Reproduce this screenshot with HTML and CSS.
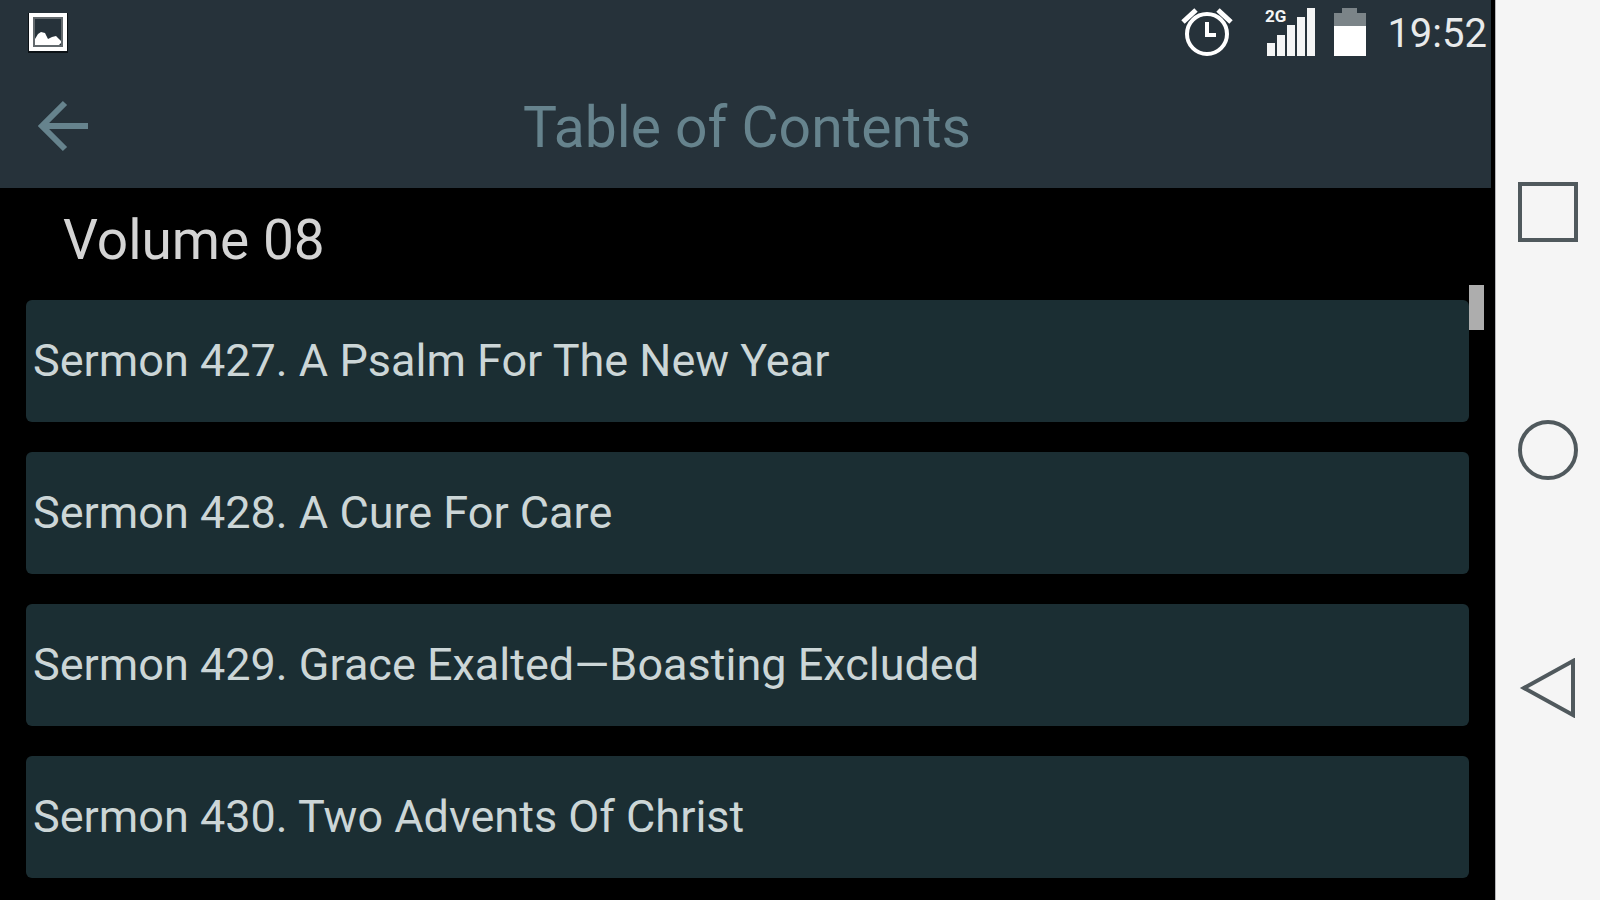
FILE: index.html
```
<!DOCTYPE html>
<html lang="en">
<head>
  <meta charset="UTF-8" />
  <meta name="viewport" content="width=device-width, initial-scale=1" />
  <title>Table of Contents</title>
  <link rel="stylesheet" href="styles.css">
</head>
<body>

  <div class="screen">
    <header class="top">
      <div class="status-bar">
        <svg class="picture-icon" width="40" height="42" viewBox="0 0 40 42">
          <path d="M0 2h40v40H0z" fill="#0c1216" />
          <path d="M1 2h38v38H1z" fill="#fff" />
          <path d="M5 6h30v30H5z" fill="#62696d" />
          <path d="M7 8h26v26H7z" fill="#26323a" />
          <path d="M7 34v-6l3-5 3-2 4 1 3 6 4-2 4-1 3 3 2 2v2l-2 2z" fill="#fff" />
        </svg>
        <div class="status-right">
          <svg class="alarm-icon" width="52" height="50" viewBox="0 0 52 50" fill="none" stroke="#fff">
            <circle cx="26" cy="27" r="20" stroke-width="4" />
            <path d="M2 15 15 3M50 15 37 3" stroke-width="5" />
            <path d="M26 15v13h9" stroke-width="4" />
          </svg>
          <svg class="signal-icon" width="52" height="50" viewBox="0 0 52 50" fill="#f4f5f5">
            <path d="M2 36h8v13H2zM12 28h8v21h-8zM22 18h8v31h-8zM32 10h8v39h-8zM42 1h8v48h-8z" />
            <text x="0" y="15" class="network">2G</text>
          </svg>
          <svg class="battery-icon" width="34" height="50" viewBox="0 0 34 50">
            <path d="M9 1h15v5h9v13H1V6h8z" fill="#7b8488" />
            <path d="M1 19h32v30H1z" fill="#fff" />
          </svg>
          <span class="clock">19:52</span>
        </div>
      </div>

      <div class="title-bar">
        <button class="back-btn" aria-label="Back">
          <svg width="52" height="52" viewBox="0 0 52 52" fill="none" stroke="#66838d" stroke-width="6">
            <path d="M51 26H5M28 3 5 26l23 23" />
          </svg>
        </button>
        <h1>Table of Contents</h1>
      </div>
    </header>

    <main>
      <h2>Volume 08</h2>
      <ul class="sermons">
        <li><a href="#427">Sermon 427. A Psalm For The New Year</a></li>
        <li><a href="#428">Sermon 428. A Cure For Care</a></li>
        <li><a href="#429">Sermon 429. Grace Exalted—Boasting Excluded</a></li>
        <li><a href="#430">Sermon 430. Two Advents Of Christ</a></li>
      </ul>
      <div class="scroll-thumb"></div>
    </main>
  </div>

  <nav class="nav-bar">
    <button aria-label="Recent apps">
      <svg width="60" height="60" viewBox="0 0 60 60"><path d="M2 2h56v56H2z" /></svg>
    </button>
    <button aria-label="Home">
      <svg width="60" height="60" viewBox="0 0 60 60"><circle cx="30" cy="30" r="28" /></svg>
    </button>
    <button aria-label="Back">
      <svg width="60" height="60" viewBox="0 0 60 60"><path d="M55 3v54L6 30z" /></svg>
    </button>
  </nav>

</body>
</html>
```
FILE: styles.css
```
* { box-sizing: border-box; }
body {
  margin: 0;
  height: 100vh;
  display: flex;
  overflow: hidden;
  background: #000;
  color: #d4d4d4;
  font-family: Roboto, 'Liberation Sans', sans-serif;
}
h1, h2 {
  margin: 0;
  font-weight: 400;
}
button {
  padding: 0;
  border: none;
  background: none;
  cursor: pointer;
}
svg { display: block; }

.screen {
  flex: 1;
  min-width: 0;
}

/* Header */
.top {
  margin-right: 4px;
  background: #26323a;
}
.status-bar {
  display: flex;
  justify-content: space-between;
  align-items: center;
  height: 64px;
  padding: 0 4px 0 28px;
}
.status-right {
  display: flex;
  align-items: center;
}
.signal-icon { margin-left: 32px; }
.battery-icon { margin: 0 20px 0 16px; }
.network {
  font-size: 17px;
  font-weight: 700;
}
.clock {
  padding-top: 4px;
  color: #e8eaeb;
  font-size: 40px;
  line-height: 60px;
}
.title-bar {
  display: grid;
  grid-template-columns: 52px 1fr 52px;
  align-items: center;
  height: 124px;
  padding: 0 34px 0 37px;
}
h1 {
  padding-top: 4px;
  color: #66838d;
  font-size: 57px;
  line-height: 120px;
  text-align: center;
}

/* Contents list */
main {
  position: relative;
}
h2 {
  padding: 0 0 8px 63px;
  font-size: 55px;
  line-height: 104px;
}
.sermons {
  display: flex;
  flex-direction: column;
  gap: 30px;
  margin: 0;
  padding: 0 26px 30px;
  list-style: none;
}
.sermons a {
  display: block;
  padding: 0 7px;
  border-radius: 6px;
  background: #1b2e33;
  color: #ccd6d7;
  font-size: 45px;
  line-height: 122px;
  text-decoration: none;
}
.scroll-thumb {
  position: absolute;
  top: 97px;
  right: 11px;
  width: 15px;
  height: 45px;
  background: #adadad;
}

/* System buttons */
.nav-bar {
  flex: none;
  display: flex;
  flex-direction: column;
  justify-content: center;
  align-items: center;
  gap: 178px;
  width: 105px;
  border-left: 1px solid #b5b5b8;
  background: #f5f5f5;
}
.nav-bar svg {
  fill: none;
  stroke: #50595d;
  stroke-width: 4;
}
```
